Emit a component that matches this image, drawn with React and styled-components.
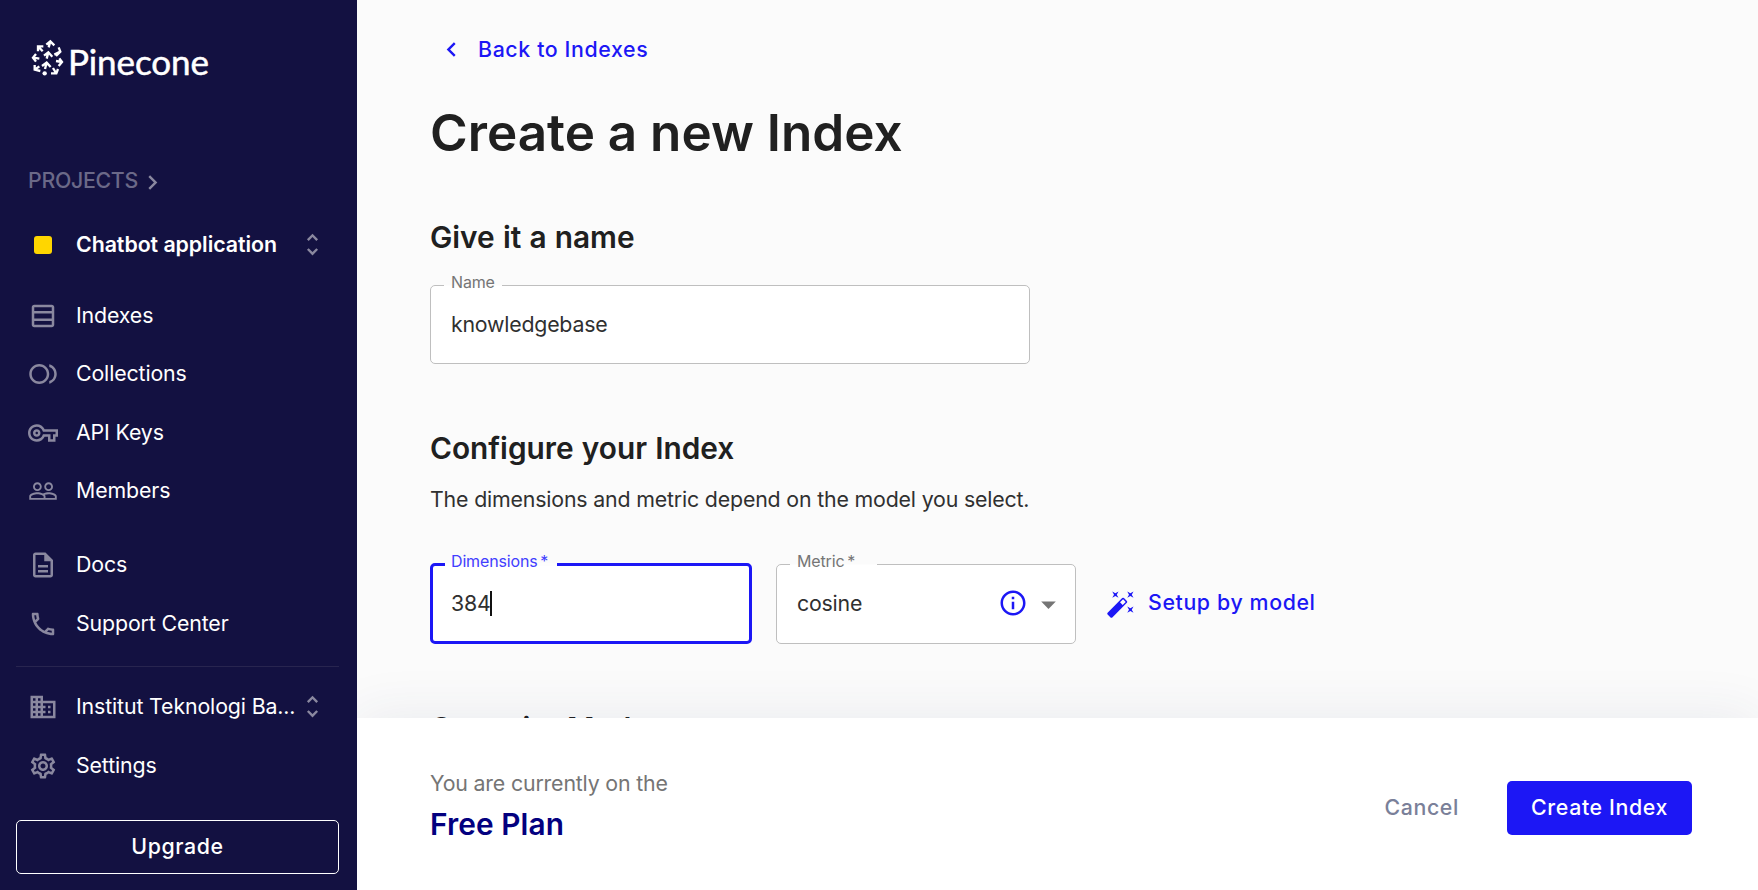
import React from "react";
import styled, { createGlobalStyle } from "styled-components";
import {
  MdArrowDropDown,
  MdAutoFixHigh,
  MdChevronLeft,
  MdChevronRight,
  MdOutlineBusiness,
  MdOutlineDescription,
  MdOutlineInfo,
  MdOutlinePhone,
  MdOutlineSettings,
  MdOutlineTableRows,
  MdOutlineVpnKey,
  MdPeopleOutline,
  MdToll,
  MdUnfoldMore,
} from "react-icons/md";

const color = {
  navy: "#131141",
  blue: "#1c17f5",
  ink: "#202020",
  body: "#303030",
  muted: "#757575",
  line: "#bfbfbf",
  page: "#fbfbfb",
};

const GlobalStyle = createGlobalStyle`
  *, *::before, *::after { box-sizing: border-box; }
  body {
    margin: 0;
    font-family: Inter, sans-serif;
    font-size: 21.33px;
    line-height: 30px;
    color: ${color.body};
    background: ${color.page};
  }
  h1, h2, p { margin: 0; }
  svg { display: block; flex: none; }
`;

const Shell = styled.div`
  display: flex;
  height: 890px;
  overflow: hidden;
`;

const Sidebar = styled.aside`
  position: relative;
  z-index: 2;
  flex: none;
  display: flex;
  flex-direction: column;
  width: 357px;
  padding: 38px 18px 16px 16px;
  background: ${color.navy};
  color: #fff;
`;

const Logo = styled.div`
  display: flex;
  align-items: center;
  gap: 4px;
  height: 46px;
  padding-left: 14px;
`;

const LogoMark = styled.svg`
  width: 34px;
  height: 38px;
  margin-top: -8px;
`;

const Wordmark = styled.span`
  font-family: Lato, sans-serif;
  font-size: 35px;
  line-height: 44px;
  letter-spacing: -0.1px;
  -webkit-text-stroke: 0.5px #fff;
`;

const ProjectsLink = styled.div`
  display: flex;
  align-items: center;
  height: 30px;
  margin-top: 81px;
  padding-left: 12px;
  font-weight: 500;
  letter-spacing: -0.3px;
  color: #6b6988;

  svg {
    margin: 5px 0 0;
    color: #8a889f;
  }
`;

const NavGroup = styled.nav`
  display: flex;
  flex-direction: column;
  margin-top: ${(p) => p.$gap}px;
`;

const NavRow = styled.a`
  display: flex;
  align-items: center;
  height: ${(p) => p.$height || 58.5}px;
  padding: 0 12px;
  font-weight: ${(p) => (p.$strong ? 600 : 400)};
  letter-spacing: ${(p) => (p.$strong ? -0.05 : -0.13)}px;
  white-space: nowrap;
`;

const NavIcon = styled.span`
  display: flex;
  justify-content: center;
  width: 30px;
  margin-right: 18px;
  color: #8a889f;
  transform: ${(p) => (p.$mirror ? "scaleX(-1)" : "none")};
`;

const NavText = styled.span`
  flex: 1;
  padding-bottom: 2px;
`;

const Switcher = styled(MdUnfoldMore)`
  color: #8a889f;
`;

const Swatch = styled.span`
  width: 18px;
  height: 18px;
  border-radius: 3px;
  background: #ffd600;
`;

const Divider = styled.hr`
  width: 100%;
  height: 1px;
  margin: 12.5px 0 0;
  border: 0;
  background: #28254f;
`;

const Button = styled.button`
  display: flex;
  align-items: center;
  justify-content: center;
  height: 54px;
  padding: 0 0 2px;
  border: 0;
  border-radius: 5px;
  background: none;
  font: 500 21.33px/30px Inter, sans-serif;
  letter-spacing: 0.62px;
  color: ${color.blue};
`;

const UpgradeButton = styled(Button)`
  margin-top: 25px;
  border: 1px solid #fff;
  color: #fff;
`;

const Main = styled.main`
  flex: 1;
  display: flex;
  flex-direction: column;
  min-width: 0;
`;

const Content = styled.section`
  height: 718px;
  padding: 34px 0 0 73px;
  overflow: hidden;
`;

const BackButton = styled(Button)`
  height: 30px;
  gap: 12px;
  padding: 0 0 0 7px;
`;

const Title = styled.h1`
  margin-top: 38px;
  font-size: 51.2px;
  font-weight: 600;
  line-height: 60px;
  color: ${color.ink};
`;

const Heading = styled.h2`
  margin-top: ${(p) => p.$gap}px;
  font-size: 29.8px;
  font-weight: 600;
  line-height: 36px;
  word-spacing: 0.7px;
  color: ${color.ink};
`;

const Hint = styled.p`
  margin-top: 18px;
  letter-spacing: -0.17px;
`;

const FieldRow = styled.div`
  display: flex;
  align-items: flex-end;
  margin-top: ${(p) => p.$gap}px;
`;

const Field = styled.div`
  position: relative;
  display: flex;
  align-items: center;
  width: ${(p) => p.$width}px;
  height: ${(p) => p.$height}px;
  margin-left: ${(p) => p.$offset || 0}px;
  padding-left: ${(p) => (p.$focused ? 18 : 20)}px;
  border: ${(p) => (p.$focused ? `3px solid ${color.blue}` : `1px solid ${color.line}`)};
  border-radius: 5px;
  background: #fff;
`;

const FieldValue = styled.span`
  padding-bottom: 2px;
  letter-spacing: -0.22px;
`;

const FieldLabel = styled.label`
  position: absolute;
  z-index: 0;
  top: ${(p) => (p.$focused ? -15 : -14)}px;
  left: ${(p) => (p.$focused ? 12 : 13)}px;
  width: ${(p) => p.$notch}px;
  padding-left: ${(p) => (p.$focused ? 6 : 7)}px;
  font-size: 16px;
  line-height: 20px;
  letter-spacing: -0.15px;
  word-spacing: -1.6px;
  color: ${(p) => (p.$focused ? "#423eff" : color.muted)};

  &::before {
    content: "";
    position: absolute;
    z-index: -1;
    top: ${(p) => (p.$focused ? 12 : 13)}px;
    left: 0;
    width: 100%;
    height: ${(p) => (p.$focused ? 3 : 1)}px;
    background: #fdfdfd;
  }
`;

const Caret = styled.span`
  width: 2px;
  height: 25px;
  margin-left: -1px;
  background: #111;
`;

const SelectIcons = styled.span`
  display: flex;
  align-items: center;
  margin-left: auto;
  padding-right: 9px;
  color: ${color.muted};
`;

const InfoIcon = styled(MdOutlineInfo)`
  margin: -2px 3px 0 0;
  color: ${color.blue};
`;

const SetupButton = styled(Button)`
  height: 80px;
  gap: 12px;
  margin-left: 30px;
  padding-bottom: 4px;

  svg {
    margin-top: 4px;
  }
`;

const Footer = styled.footer`
  position: relative;
  z-index: 1;
  flex: 1;
  display: flex;
  align-items: center;
  padding: 8px 66px 0 73px;
  background: #fff;
  box-shadow: 0 0 53px rgba(45, 60, 100, 0.09);
`;

const Plan = styled.div`
  flex: 1;
  padding-bottom: 6px;
`;

const PlanNote = styled.p`
  letter-spacing: -0.17px;
  color: ${color.muted};
`;

const PlanName = styled.p`
  margin-top: 8px;
  font-size: 29.8px;
  font-weight: 600;
  line-height: 36px;
  letter-spacing: 0.1px;
  color: #03007f;
`;

const CancelButton = styled(Button)`
  margin-right: 48px;
  color: #7a8099;
`;

const CreateButton = styled(Button)`
  width: 185px;
  background: ${color.blue};
  color: #fff;
`;

const navItems = [
  { label: "Indexes", icon: MdOutlineTableRows },
  { label: "Collections", icon: MdToll, mirror: true },
  { label: "API Keys", icon: MdOutlineVpnKey },
  { label: "Members", icon: MdPeopleOutline },
];

const helpItems = [
  { label: "Docs", icon: MdOutlineDescription },
  { label: "Support Center", icon: MdOutlinePhone },
];

const accountItems = [
  { label: "Institut Teknologi Ba...", icon: MdOutlineBusiness, switcher: true },
  { label: "Settings", icon: MdOutlineSettings },
];

function NavList({ items, gap, rowHeight }) {
  return (
    <NavGroup $gap={gap}>
      {items.map(({ label, icon: Icon, mirror, switcher }) => (
        <NavRow key={label} $height={rowHeight}>
          <NavIcon $mirror={mirror}>
            <Icon size={30} />
          </NavIcon>
          <NavText>{label}</NavText>
          {switcher && <Switcher size={29} />}
        </NavRow>
      ))}
    </NavGroup>
  );
}

function PineconeMark() {
  return (
    <LogoMark viewBox="30 24 102 114" fill="none" stroke="#fff" strokeWidth="7">
      <path d="M86 52 91 34M79 44 91 34 103 46" />
      <path d="M80 86 85 67M72 77 85 67 97 80" />
      <path d="M75 117 80 98M66 108 80 98 92 111" />
      <path d="M68 64 56 51M54 64V49H70" />
      <path d="M58 86 41 83M48 72 39 83 48 95" />
      <path d="M58 109 47 117M44 105V119L61 123" />
      <path d="M103 74 121 65M116 52 121 65 108 78" />
      <path d="M108 93 126 96M118 85 126 96 116 108" />
      <path d="M99 114 108 129M93 130H109L114 117" />
      <circle cx="74" cy="130" r="6.5" fill="#fff" stroke="none" />
    </LogoMark>
  );
}

export default function App() {
  return (
    <>
      <GlobalStyle />
      <Shell>
        <Sidebar>
          <Logo>
            <PineconeMark />
            <Wordmark>Pinecone</Wordmark>
          </Logo>
          <ProjectsLink>
            PROJECTS
            <MdChevronRight size={29} />
          </ProjectsLink>
          <NavGroup $gap={20}>
            <NavRow $strong $height={60}>
              <NavIcon>
                <Swatch />
              </NavIcon>
              <NavText>Chatbot application</NavText>
              <Switcher size={29} />
            </NavRow>
          </NavGroup>
          <NavList items={navItems} gap={11.5} />
          <NavList items={helpItems} gap={15} rowHeight={59} />
          <Divider />
          <NavList items={accountItems} gap={10.5} rowHeight={59} />
          <UpgradeButton>Upgrade</UpgradeButton>
        </Sidebar>
        <Main>
          <Content>
            <BackButton>
              <MdChevronLeft size={29} />
              Back to Indexes
            </BackButton>
            <Title>Create a new Index</Title>
            <Heading $gap={57}>Give it a name</Heading>
            <FieldRow $gap={30}>
              <Field $width={600} $height={79}>
                <FieldLabel $notch={58}>Name</FieldLabel>
                <FieldValue>knowledgebase</FieldValue>
              </Field>
            </FieldRow>
            <Heading $gap={66}>Configure your Index</Heading>
            <Hint>The dimensions and metric depend on the model you select.</Hint>
            <FieldRow $gap={49}>
              <Field $focused $width={322} $height={81}>
                <FieldLabel $focused $notch={112}>
                  Dimensions *
                </FieldLabel>
                <FieldValue>384</FieldValue>
                <Caret />
              </Field>
              <Field $width={300} $height={80} $offset={24}>
                <FieldLabel $notch={87}>Metric *</FieldLabel>
                <FieldValue>cosine</FieldValue>
                <SelectIcons>
                  <InfoIcon size={30} />
                  <MdArrowDropDown size={35} />
                </SelectIcons>
              </Field>
              <SetupButton>
                <MdAutoFixHigh size={30} />
                Setup by model
              </SetupButton>
            </FieldRow>
            <Heading $gap={66}>Capacity Mode</Heading>
          </Content>
          <Footer>
            <Plan>
              <PlanNote>You are currently on the</PlanNote>
              <PlanName>Free Plan</PlanName>
            </Plan>
            <CancelButton>Cancel</CancelButton>
            <CreateButton>Create Index</CreateButton>
          </Footer>
        </Main>
      </Shell>
    </>
  );
}
